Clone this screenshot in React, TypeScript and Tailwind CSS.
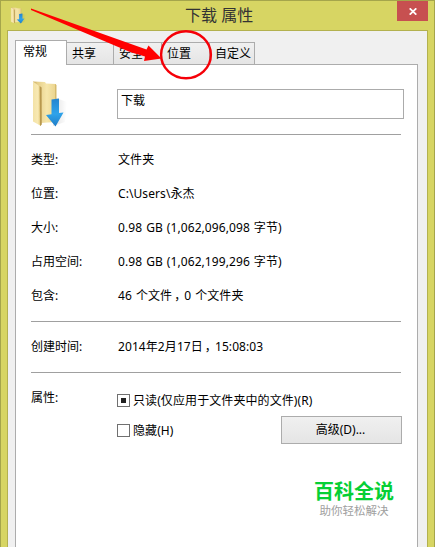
import { clsx } from 'clsx'

const TABS = [
  { label: '共享', width: 'w-[47px]', pad: 'pl-[5px]' },
  { label: '安全', width: 'w-[48px]', pad: 'pl-[5px]' },
  { label: '位置', width: 'w-[48px]', pad: 'pl-[5px]' },
  { label: '自定义', width: 'w-[45px]', pad: 'pl-[5px]' },
]

const DETAILS = [
  { label: '类型:', value: '文件夹' },
  { label: '位置:', value: 'C:\\Users\\永杰' },
  { label: '大小:', value: '0.98 GB (1,062,096,098 字节)' },
  { label: '占用空间:', value: '0.98 GB (1,062,199,296 字节)' },
  { label: '包含:', value: '46 个文件，0 个文件夹' },
]

function FolderIcon({ className }: { className?: string }) {
  return (
    <svg viewBox="0 0 36 48" preserveAspectRatio="none" className={className}>
      <defs>
        <linearGradient id="flap" x1="0" x2="1">
          <stop offset="0" stopColor="#f3e2a6" />
          <stop offset="0.6" stopColor="#f8e9b3" />
          <stop offset="1" stopColor="#e3c876" />
        </linearGradient>
        <linearGradient id="body" x1="0" x2="1">
          <stop offset="0" stopColor="#c5a558" />
          <stop offset="0.2" stopColor="#e6cf8a" />
          <stop offset="0.6" stopColor="#f6e6ab" />
          <stop offset="1" stopColor="#ead38c" />
        </linearGradient>
        <linearGradient id="arrow" x1="0" y1="0" x2="0" y2="1">
          <stop offset="0" stopColor="#2484cf" />
          <stop offset="0.55" stopColor="#2fa3ea" />
          <stop offset="1" stopColor="#1f7cc6" />
        </linearGradient>
        <linearGradient id="shade" x1="0" x2="1">
          <stop offset="0" stopColor="#000" stopOpacity="0.12" />
          <stop offset="1" stopColor="#000" stopOpacity="0" />
        </linearGradient>
      </defs>
      <path d="M25 18 L36 22 L34 42 L22 46 Z" fill="url(#shade)" />
      <path d="M2 1.5 L14 2 L15 3.5 L25 4 L25 42 L9 43 Z" fill="url(#body)" />
      <path d="M24 4 L25.5 5 L25.5 42 L24 42.5 Z" fill="#d6ba6c" />
      <path d="M2 1.5 L9.5 7 L10 46 L2 41.5 Z" fill="url(#flap)" />
      <path d="M8.6 6 L10.6 7.5 L10.8 44.5 L9 46 Z" fill="#b8984e" />
      <path
        d="M20.5 19.5 L28 18.5 L28 33 L32.5 32.5 L24.5 46.5 L15 35 L20.5 34.3 Z"
        fill="url(#arrow)"
      />
    </svg>
  )
}

function TitleBar() {
  return (
    <div className="flex h-[29px] shrink-0 items-start">
      <FolderIcon className="mt-[6px] ml-[9px] h-[17px] w-4" />
      <h1 className="ml-[159px] grow text-[16px] leading-[29px] text-[#333]">下载 属性</h1>
      <button className="mr-[6px] flex h-5 w-[31px] items-center justify-center bg-[#c75050]">
        <svg viewBox="0 0 8 7" className="h-[7px] w-2">
          <path d="M0.7 0.3 L7.3 6.7 M7.3 0.3 L0.7 6.7" stroke="#fff" strokeWidth="1.7" />
        </svg>
      </button>
    </div>
  )
}

function TabStrip() {
  return (
    <div className="relative z-10 -mb-px flex h-[25px] items-end">
      <div className="h-[25px] w-[52px] border border-b-0 border-[#acacac] bg-white pl-[7px] leading-[22px]">
        常规
      </div>
      {TABS.map((tab) => (
        <div
          key={tab.label}
          className={clsx(
            'h-[23px] border border-l-0 border-[#acacac] bg-linear-to-b from-[#f0f0f0] to-[#e5e5e5] leading-[22px] whitespace-nowrap',
            tab.width,
            tab.pad,
          )}
        >
          {tab.label}
        </div>
      ))}
    </div>
  )
}

function Row({ label, value }: { label: string; value: string }) {
  const [head, tail] = value.split('，')
  return (
    <div className="flex h-[34px] items-center">
      <dt className="w-[87px]">{label}</dt>
      <dd className="tracking-[0.08px] whitespace-nowrap [word-spacing:0.8px]">
        {head}
        {tail && <span className="relative left-[2px]">，</span>}
        {tail}
      </dd>
    </div>
  )
}

function Check({ label, mixed }: { label: string; mixed?: boolean }) {
  return (
    <label className="flex h-[30px] items-center gap-[3px] whitespace-nowrap">
      <span className="flex h-[13px] w-[13px] items-center justify-center border border-[#707070] bg-white">
        {mixed && <span className="h-[5px] w-[5px] bg-[#212121]" />}
      </span>
      <span className="pt-px tracking-[0.09px]">{label}</span>
    </label>
  )
}

// Red pointer to the location tab
function Annotation() {
  return (
    <svg
      viewBox="0 0 435 547"
      className="pointer-events-none absolute -top-px -left-px z-20 h-[547px] w-[435px]"
    >
      <path
        d="M31 8.5 L32.5 9 L146.5 49.5 L148.5 45.5 L161.5 58.5 L144 61 L145 56.5 L130 52 L31 10 Z"
        fill="#f00"
      />
      <ellipse cx="186" cy="54.8" rx="24.9" ry="23.5" fill="none" stroke="#f50008" strokeWidth="2.4" />
    </svg>
  )
}

export default function App() {
  return (
    <div className="relative flex h-[547px] w-[435px] flex-col overflow-hidden border border-b-0 border-[#a5a54b] bg-[#d7d563] font-['Noto_Sans','Noto_Sans_CJK_SC',sans-serif] text-[12px] text-black">
      <TitleBar />
      <main className="mx-[6px] flex grow flex-col border border-b-0 border-[#b3b14f] bg-[#f0f0f0] pt-[9px] pr-[9px] pl-[7px]">
        <TabStrip />
        <section className="flex grow flex-col border border-b-0 border-[#acacac] bg-white pr-[16px] pl-[15px]">
          <div className="flex h-[70px] items-start border-b border-[#a0a0a0]">
            <FolderIcon className="mt-[15px] h-12 w-9 shrink-0" />
            <div className="mt-6 ml-[50px] h-[30px] w-[287px] shrink-0 border border-[#ababab] pl-[3px] leading-[22px]">
              下载
            </div>
          </div>
          <dl className="mt-[8px] h-[179px] border-b border-[#a0a0a0]">
            {DETAILS.map((row) => (
              <Row key={row.label} {...row} />
            ))}
          </dl>
          <dl className="flex h-[51px] items-center border-b border-[#a0a0a0]">
            <Row label="创建时间:" value="2014年2月17日，15:08:03" />
          </dl>
          <div className="flex pt-[12px]">
            <div className="w-[86px] pt-[4px]">属性:</div>
            <div className="grow">
              <Check label="只读(仅应用于文件夹中的文件)(R)" mixed />
              <div className="flex items-start">
                <Check label="隐藏(H)" />
                <button className="mt-px -mr-px ml-auto h-7 w-[121px] border border-[#acacac] bg-linear-to-b from-[#f0f0f0] to-[#e5e5e5] pr-[2px]">
                  高级(D)...
                </button>
              </div>
            </div>
          </div>
          <footer className="mt-[34px] mr-[7px] self-end text-center font-['Noto_Sans_CJK_SC',sans-serif]">
            <div className="text-[20px] leading-6 font-bold text-[#06cf35]">百科全说</div>
            <div className="text-[11.5px] leading-[14px] text-[#a0a0a0]">助你轻松解决</div>
          </footer>
        </section>
      </main>
      <Annotation />
    </div>
  )
}
